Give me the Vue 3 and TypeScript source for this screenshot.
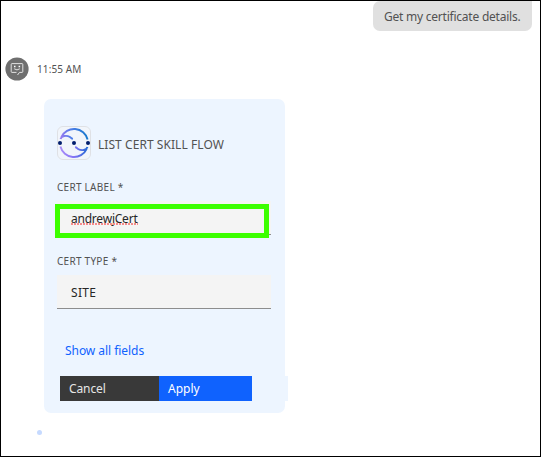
<script setup lang="ts">
import { ref } from 'vue'

const certLabel = ref<string>('andrewjCert')
const certType = ref<string>('SITE')
</script>

<template>
  <main class="chat">
    <div class="outgoing">
      <p class="bubble"><span class="t-msg">Get my certificate details.</span></p>
    </div>
    <header class="sender">
      <svg class="avatar" viewBox="0 0 24 24" aria-hidden="true">
        <circle cx="12" cy="12" r="11.6" fill="#6f6f6f" />
        <path d="M7 6.6h10q.8 0 .8.8v7.2q0 .8-.8.8h-2.5L12.5 18M11.500 15.400H7q-.8 0-.8-.8V7.400q0-.8.8-.8" fill="none" stroke="#eee" stroke-width=".9" />
        <path d="M9 8.800h1.500v1.400H9zM13.600 8.800h1.500v1.400h-1.500z" fill="#fff" />
        <path d="M9.200 11.800q2.800 2.200 5.600 0" fill="none" stroke="#eee" stroke-width=".9" />
      </svg>
      <time class="t-time">11:55 AM</time>
    </header>
    <section class="card">
      <div class="card-head">
        <svg class="skill" viewBox="0 0 34 34" aria-hidden="true">
          <defs>
            <linearGradient id="arcTop" x1="0" y1="0" x2="1" y2="0">
              <stop offset="0" stop-color="#9a7bf0" />
              <stop offset=".4" stop-color="#4c7de8" />
              <stop offset="1" stop-color="#1678cc" />
            </linearGradient>
            <linearGradient id="arcBottom" x1="0" y1="0" x2="1" y2="0">
              <stop offset="0" stop-color="#a98cf8" />
              <stop offset=".5" stop-color="#8574f5" />
              <stop offset="1" stop-color="#2469d4" />
            </linearGradient>
          </defs>
          <rect x=".5" y=".5" width="33" height="33" rx="5.500" fill="#f1f5fb" stroke="#dfe1e5" />
          <path d="M3.500 13C4.500 9.800 9.500 9 12.500 10.800 14 11.700 14.800 12.600 15.800 13M4.300 11.200A14 14 0 0 1 30.600 13.500" fill="none" stroke="url(#arcTop)" stroke-width="1.900" />
          <path d="M30.500 21C29.500 24.200 24.500 25 21.500 23.200 20 22.300 19.200 21.400 18.200 21M29.700 22.800A14 14 0 0 1 3.400 20.500" fill="none" stroke="url(#arcBottom)" stroke-width="1.900" />
          <g fill="#001d6c"><circle cx="3" cy="17" r="2" /><circle cx="17" cy="17" r="2" /><circle cx="31" cy="17" r="2" /></g>
        </svg>
        <h1 class="t-title">LIST CERT SKILL FLOW</h1>
      </div>
      <div class="field">
        <label class="t-label">CERT LABEL *</label>
        <div class="input">
          <span class="t-name">{{ certLabel }}</span>
          <svg class="spelling" viewBox="0 0 67 2" aria-hidden="true"><path d="M0 1h67" stroke="#f58b8b" stroke-width="2" stroke-dasharray="2 1" /></svg>
          <div class="highlight"></div>
        </div>
      </div>
      <div class="field second">
        <label class="t-label t-type">CERT TYPE *</label>
        <div class="input"><span class="t-site">{{ certType }}</span></div>
      </div>
      <a class="more"><span class="t-more">Show all fields</span></a>
      <div class="actions">
        <button class="cancel"><span class="t-cancel">Cancel</span></button>
        <button class="apply"><span class="t-apply">Apply</span></button>
        <span class="rest"></span>
      </div>
    </section>
    <i class="typing"></i>
  </main>
</template>

<style>
body { background: #fff; }
</style>

<style scoped>
.chat {
  box-sizing: border-box;
  width: 541px;
  height: 457px;
  border: 1px solid #000;
  overflow: hidden;
  font-family: "Noto Sans", "Open Sans", sans-serif;
  color: #525252;
}
span, time, h1, label { white-space: nowrap; }
.outgoing { display: flex; justify-content: flex-end; padding-right: 8px; height: 30px; }
.bubble {
  box-sizing: border-box;
  width: 159px;
  margin: 0;
  padding-left: 11px;
  line-height: 29px;
  background: #e0e0e0;
  border-radius: 7px 0 7px 7px;
}
.sender { display: flex; align-items: center; gap: 8px; height: 24px; margin: 26px 0 0 4px; }
.avatar { width: 24px; height: 24px; }
.card {
  box-sizing: border-box;
  width: 241px;
  height: 314px;
  margin: 18px 0 0 43px;
  padding: 27px 0 0 13px;
  background: #edf5ff;
  border-radius: 7px;
}
.card-head { display: flex; align-items: center; gap: 7px; height: 34px; }
.skill { width: 34px; height: 34px; }
h1 { margin: 3px 0 0; font-weight: 400; }
.field { margin-top: 20px; }
.field label { display: block; height: 14px; line-height: 14px; }
.second { margin-top: 19px; }
.input {
  position: relative;
  box-sizing: border-box;
  width: 214px;
  height: 34px;
  margin-top: 7px;
  padding-left: 14px;
  background: #f4f4f4;
  border-bottom: 1px solid #8d8d8d;
  line-height: 32px;
  color: #262626;
}
.highlight { position: absolute; left: -2px; top: 3px; width: 204px; height: 24px; border: 5px solid #3cff00; }
.spelling { position: absolute; left: 14px; top: 22px; width: 67px; height: 2px; }
.more { display: block; margin: 31px 0 0 8px; height: 18px; line-height: 18px; color: #0f62fe; }
.actions { display: flex; width: 228px; height: 25px; margin: 18px 0 0 3px; }
button { border: 0; padding: 0 0 0 9px; height: 25px; line-height: 24px; text-align: left; color: #fff; font-family: inherit; }
.cancel { width: 99px; background: #393939; color: #e6e6e6; }
.apply { width: 93px; background: #0f62fe; }
.rest { flex: 1; background: #edf5ff; }
.typing { display: block; width: 5px; height: 5px; margin: 17px 0 0 36px; border-radius: 50%; background: #c6daff; }
.t-msg { font-size: 12px; letter-spacing: -.23px; }
.t-time { font-size: 10px; letter-spacing: .1px; }
.t-title { font-size: 12px; letter-spacing: .06px; }
.t-label { font-size: 10px; letter-spacing: .27px; }
.t-name { font-size: 12px; letter-spacing: -.22px; }
.t-site { font-size: 12px; letter-spacing: .3px; }
.t-more { font-size: 12px; letter-spacing: -.05px; }
.t-cancel { font-size: 12px; letter-spacing: -.1px; }
.t-apply { font-size: 12px; }
</style>
